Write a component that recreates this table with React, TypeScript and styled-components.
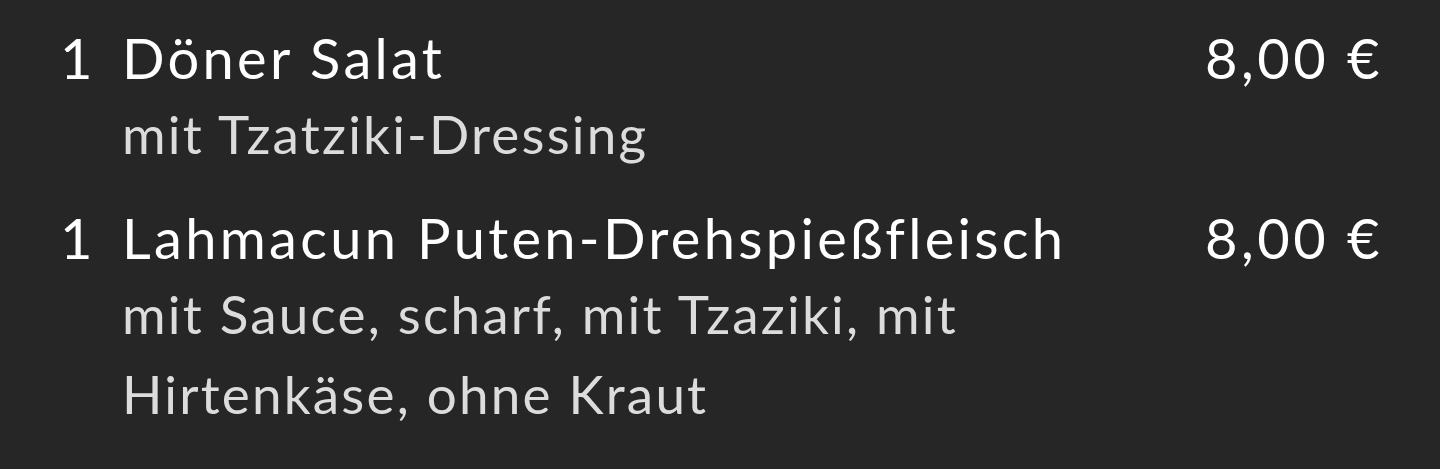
import styled, { createGlobalStyle } from "styled-components";

const GlobalStyle = createGlobalStyle`
  html, body {
    margin: 0;
    padding: 0;
    background: #262626;
  }
  body {
    font-family: Lato, "Noto Sans", sans-serif;
  }
`;

const List = styled.ul`
  list-style: none;
  margin: 0;
  padding: 22px 57px 0 56px;
  display: flex;
  flex-direction: column;
  gap: 28px;
`;

const Item = styled.li`
  display: grid;
  grid-template-columns: 66px 1fr auto;
  align-items: start;
`;

const Qty = styled.span`
  font-size: 56px;
  line-height: 72px;
  color: #ffffff;
  padding-left: 4px;
`;

const Info = styled.div`
  display: flex;
  flex-direction: column;
`;

const Name = styled.span`
  font-size: 56px;
  line-height: 72px;
  letter-spacing: 3.3px;
  color: #ffffff;
`;

const Extras = styled.span`
  font-size: 53px;
  line-height: 80px;
  letter-spacing: 2.2px;
  color: #dcdcdc;
  max-width: 860px;
`;

const Price = styled.span`
  font-size: 56px;
  line-height: 72px;
  letter-spacing: 3.5px;
  color: #ffffff;
  white-space: nowrap;
`;

const items = [
  { qty: 1, name: "Döner Salat", extras: "mit Tzatziki-Dressing", price: "8,00 €" },
  {
    qty: 1,
    name: "Lahmacun Puten-Drehspießfleisch",
    extras: "mit Sauce, scharf, mit Tzaziki, mit Hirtenkäse, ohne Kraut",
    price: "8,00 €",
  },
];

function App() {
  return (
    <>
      <GlobalStyle />
      <List>
        {items.map((item) => (
          <Item key={item.name}>
            <Qty>{item.qty}</Qty>
            <Info>
              <Name>{item.name}</Name>
              <Extras>{item.extras}</Extras>
            </Info>
            <Price>{item.price}</Price>
          </Item>
        ))}
      </List>
    </>
  );
}

export default App;
